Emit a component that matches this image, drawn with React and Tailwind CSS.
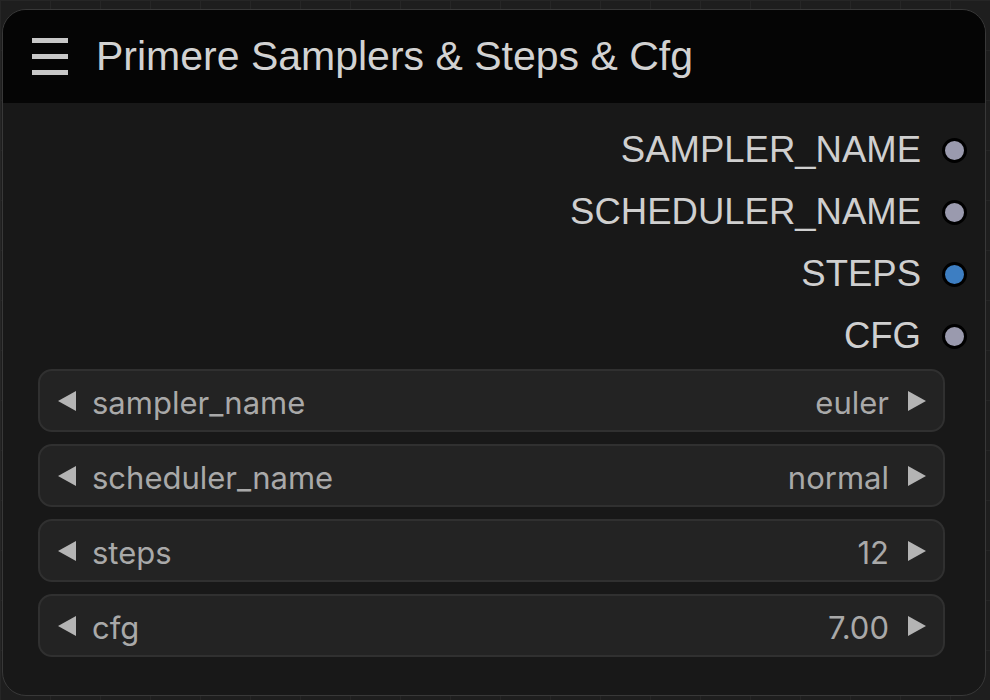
import React from "react";

const outputs = [
  { name: "SAMPLER_NAME", color: "bg-[#9a9aae]" },
  { name: "SCHEDULER_NAME", color: "bg-[#9a9aae]" },
  { name: "STEPS", color: "bg-[#3d7ec2]" },
  { name: "CFG", color: "bg-[#9a9aae]" },
];

const widgets = [
  { label: "sampler_name", value: "euler" },
  { label: "scheduler_name", value: "normal" },
  { label: "steps", value: "12" },
  { label: "cfg", value: "7.00" },
];

const Arrow = ({ dir }) => (
  <svg width="18" height="20" viewBox="0 0 18 20" className="shrink-0">
    {dir === "left" ? (
      <polygon points="18,0 18,20 0,10" fill="#b4b4b4" />
    ) : (
      <polygon points="0,0 0,20 18,10" fill="#b4b4b4" />
    )}
  </svg>
);

const Widget = ({ label, value }) => (
  <div className="h-[63px] rounded-[14px] border-2 border-[#303030] bg-[#232323] flex items-center pl-[18px] pr-[17px] font-['Inter',sans-serif] text-[31px] text-[#a9a9a9]">
    <Arrow dir="left" />
    <span className="ml-[16px] pt-[5px]">{label}</span>
    <span className="ml-auto mr-[19px] pt-[5px]">{value}</span>
    <Arrow dir="right" />
  </div>
);

export default function App() {
  return (
    <div className="w-[990px] h-[700px] bg-[#1e1e1e] bg-[linear-gradient(90deg,#262626_1px,transparent_1px),linear-gradient(#262626_1px,transparent_1px)] bg-[size:50px_50px] pt-[9px] pl-[2px] overflow-hidden">
      <div className="w-[984px] h-[687px] rounded-[24px] border border-[#383838] bg-[#181818] overflow-hidden">
        {/* header */}
        <div className="h-[93px] bg-[#050505] flex items-center pl-[29px] font-['Liberation_Sans',Arial,sans-serif]">
          <div className="w-[36px] flex flex-col gap-[11px]">
            <div className="h-[5px] bg-[#c8c8c8]" />
            <div className="h-[5px] bg-[#c8c8c8]" />
            <div className="h-[5px] bg-[#c8c8c8]" />
          </div>
          <span className="ml-[28px] text-[41px] text-[#d2d2d2]">Primere Samplers &amp; Steps &amp; Cfg</span>
        </div>

        {/* outputs */}
        <div className="pt-[16px] pr-[18px] font-['Liberation_Sans',Arial,sans-serif]">
          {outputs.map((o) => (
            <div key={o.name} className="h-[62px] flex items-center justify-end">
              <span className="text-[36.5px] text-[#cfcfcf]">{o.name}</span>
              <div className={`ml-[21px] w-[25px] h-[25px] rounded-full border-[3px] border-black ${o.color}`} />
            </div>
          ))}
        </div>

        {/* widgets */}
        <div className="mt-[2px] ml-[35px] mr-[40px] flex flex-col gap-[12px]">
          {widgets.map((w) => (
            <Widget key={w.label} {...w} />
          ))}
        </div>
      </div>
    </div>
  );
}
